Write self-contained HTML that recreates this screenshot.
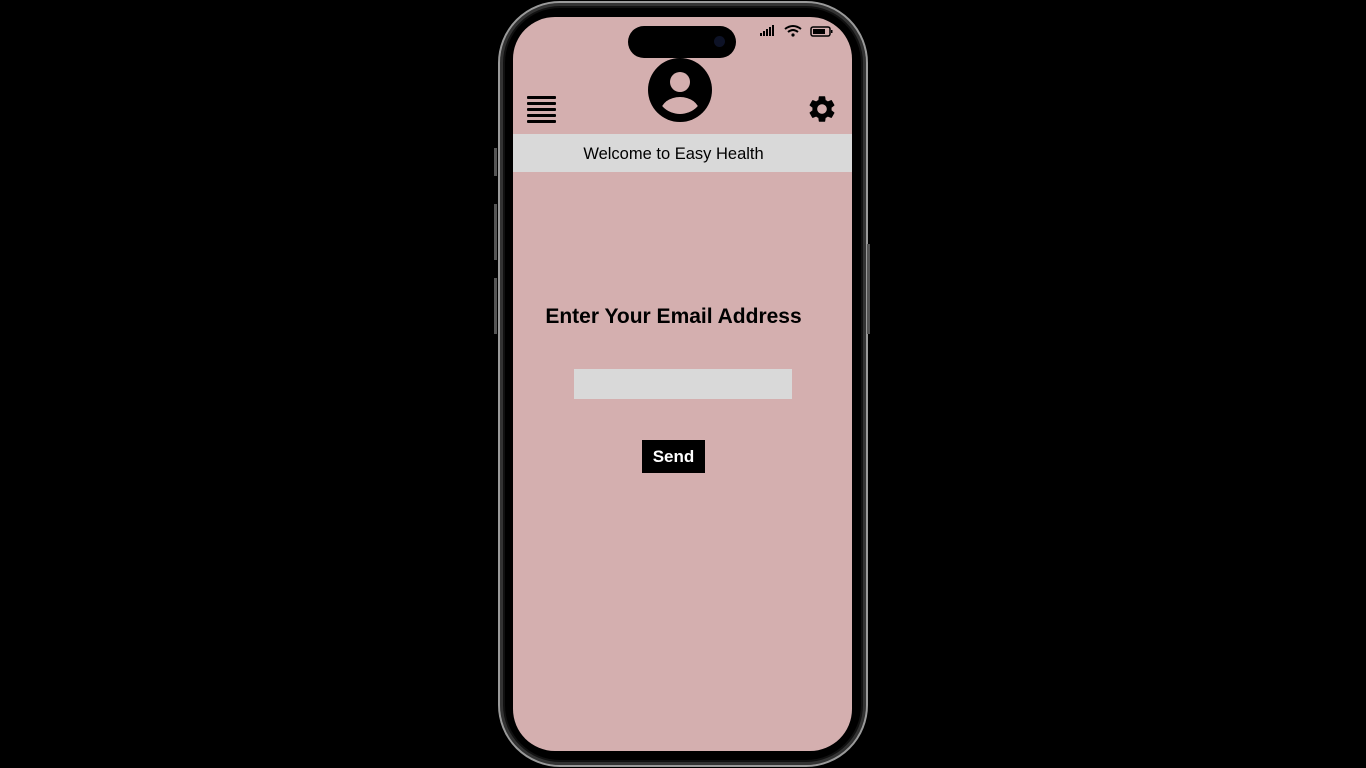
<!DOCTYPE html>
<html><head><meta charset="utf-8"><style>
body{margin:0;width:1366px;height:768px;background:#000;position:relative;overflow:hidden;font-family:"Liberation Sans",sans-serif}
.frame{position:absolute;left:498px;top:1px;width:366px;height:762px;border-radius:62px;border:2px solid #9a9a9a;box-shadow:inset 0 0 0 3px #333,inset 0 0 0 5px #111}
.btnL{position:absolute;background:#555;width:3px;left:494px}
.screen{position:absolute;left:513px;top:17px;width:339px;height:734px;border-radius:42px;background:#d4afaf;overflow:hidden}
.island{position:absolute;left:628px;top:26px;width:108px;height:32px;border-radius:16px;background:#000}
.band{position:absolute;left:0;top:117px;width:321px;height:38px;background:#d9d9d9;font-size:16.5px;text-align:center;line-height:40px;color:#000;padding-right:18px}
.h{position:absolute;left:0;width:321px;top:288px;text-align:center;font-weight:bold;font-size:21px;color:#000}
.inp{position:absolute;left:61px;top:352px;width:218px;height:30px;background:#d9d9d9}
.send{position:absolute;left:129px;top:423px;width:63px;height:33px;background:#000;color:#fff;font-weight:bold;font-size:17px;text-align:center;line-height:33px}
.ham{position:absolute;left:14px;width:29px;height:3px;background:#000;border-radius:1px}
</style></head><body>
<div class="frame"></div>
<div class="btnL" style="top:148px;height:28px"></div>
<div class="btnL" style="top:204px;height:56px"></div>
<div class="btnL" style="top:278px;height:56px"></div>
<div class="btnL" style="left:867px;top:244px;height:90px"></div>
<div class="screen">
<div class="ham" style="top:79px"></div><div class="ham" style="top:85px"></div><div class="ham" style="top:91px"></div><div class="ham" style="top:97px"></div><div class="ham" style="top:103px"></div>
<svg style="position:absolute;left:135px;top:41px" width="64" height="64" viewBox="0 0 64 64"><defs><clipPath id="c"><circle cx="32" cy="32" r="24"/></clipPath></defs><circle cx="32" cy="32" r="32" fill="#000"/><circle cx="32" cy="24" r="10" fill="#d4afaf"/><ellipse cx="32" cy="53" rx="19" ry="14" fill="#d4afaf" clip-path="url(#c)"/></svg>
<svg style="position:absolute;left:293px;top:76px" width="32" height="32" viewBox="0 0 24 24"><path fill="#000" d="M19.14 12.94c.04-.3.06-.61.06-.94 0-.32-.02-.64-.07-.94l2.030-1.580a.49.49 0 0 0 .12-.61l-1.92-3.32a.488.488 0 0 0-.59-.22l-2.39.96c-.5-.38-1.030-.7-1.62-.94l-.36-2.54a.484.484 0 0 0-.48-.41h-3.84c-.24 0-.43.17-.47.41l-.36 2.54c-.59.24-1.13.57-1.62.94l-2.39-.96c-.22-.08-.47 0-.59.22L2.74 8.87c-.12.21-.08.47.12.61l2.03 1.58c-.05.3-.09.63-.09.94s.02.64.07.94l-2.03 1.58a.49.49 0 0 0-.12.61l1.92 3.32c.12.22.37.29.59.22l2.39-.96c.5.38 1.03.7 1.62.94l.36 2.54c.05.24.24.41.48.41h3.84c.24 0 .44-.17.47-.41l.36-2.54c.59-.24 1.13-.56 1.62-.94l2.39.96c.22.08.47 0 .59-.22l1.92-3.32c.12-.22.07-.47-.12-.61l-2.01-1.58zM12 15.6c-1.98 0-3.6-1.62-3.6-3.6s1.62-3.6 3.6-3.6 3.6 1.62 3.6 3.6-1.62 3.6-3.6 3.6z"/></svg>
<svg style="position:absolute;left:246px;top:7px" width="75" height="14" viewBox="0 0 75 14"><rect x="1" y="9" width="2" height="3"/><rect x="4" y="7" width="2" height="5"/><rect x="7" y="5" width="2" height="7"/><rect x="10" y="3" width="2" height="9"/><rect x="13" y="1" width="2" height="11"/><path d="M26 5 Q34 -1 42 5" stroke="#000" stroke-width="2" fill="none"/><path d="M29 8 Q34 4 39 8" stroke="#000" stroke-width="2" fill="none"/><circle cx="34" cy="11" r="1.6"/><rect x="52" y="3" width="19" height="9" rx="2" fill="none" stroke="#000" stroke-width="1.5"/><rect x="54" y="5" width="12" height="5"/><rect x="72" y="6" width="1.5" height="3"/></svg>
<div class="band">Welcome to Easy Health</div>
<div class="h">Enter Your Email Address</div>
<div class="inp"></div>
<div class="send">Send</div>
</div>
<div class="island"></div>
<div style="position:absolute;left:714px;top:36px;width:11px;height:11px;border-radius:50%;background:#0d1226"></div>
</body></html>
